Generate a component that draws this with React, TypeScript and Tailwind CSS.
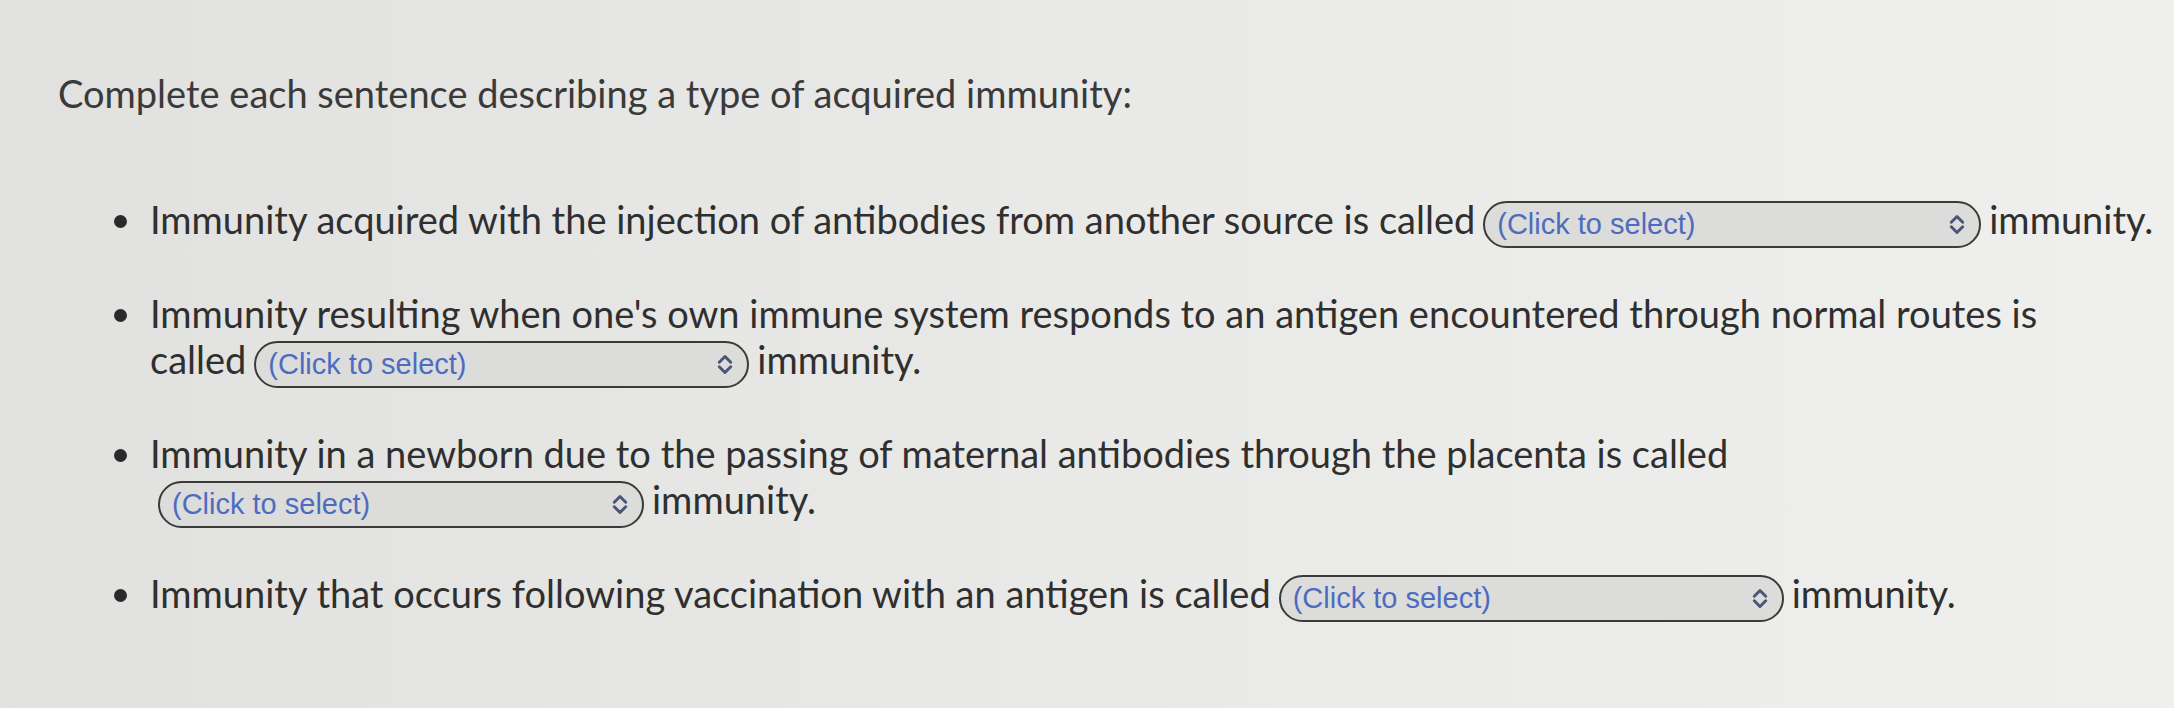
import React from 'react';

const Select: React.FC<{ width: string }> = ({ width }) => (
  <span
    className={`inline-flex items-center justify-between h-[47px] ${width} rounded-full border-[2.5px] border-[#3a3a3a] bg-[#dcdcda] pl-[12px] pr-[14px] align-middle mx-[8px] font-['Liberation_Sans',Arial,sans-serif] text-[29px] leading-none text-[#4d6cc0]`}
  >
    <span>(Click to select)</span>
    <svg width="16" height="21" viewBox="0 0 14 18" fill="none" stroke="#4a5578" strokeWidth="2.6" strokeLinecap="round" strokeLinejoin="round">
      <path d="M2 7 L7 2 L12 7" />
      <path d="M2 11 L7 16 L12 11" />
    </svg>
  </span>
);

const App: React.FC = () => {
  return (
    <div className="min-h-[708px] w-full bg-gradient-to-r from-[#e1e1df] via-[#e9e9e7] to-[#efefed] font-['Lato',sans-serif] text-[#2f2f2f]">
      <div className="pl-[58px] pt-[68px]">
        <h1 className="text-[38px] leading-[50px] text-[#3a3a3a]">
          Complete each sentence describing a type of acquired immunity:
        </h1>
        <ul className="mt-[78px] pl-[88px] list-disc text-[38px] leading-[46px] space-y-[42px] marker:text-[#2a2a2a]">
          <li className="pl-[4px]">
            Immunity acquired with the injection of antibodies from another source is called
            <Select width="w-[498px]" />
            immunity.
          </li>
          <li className="pl-[4px] pr-[60px]">
            <span>Immunity resulting when one's own immune system responds to an antigen encountered through normal routes is</span>{' '}
            <span>called</span>
            <Select width="w-[495px]" />
            immunity.
          </li>
          <li className="pl-[4px]">
            Immunity in a newborn due to the passing of maternal antibodies through the placenta is called
            <Select width="w-[486px]" />
            immunity.
          </li>
          <li className="pl-[4px]">
            Immunity that occurs following vaccination with an antigen is called
            <Select width="w-[505px]" />
            immunity.
          </li>
        </ul>
      </div>
    </div>
  );
};

export default App;
